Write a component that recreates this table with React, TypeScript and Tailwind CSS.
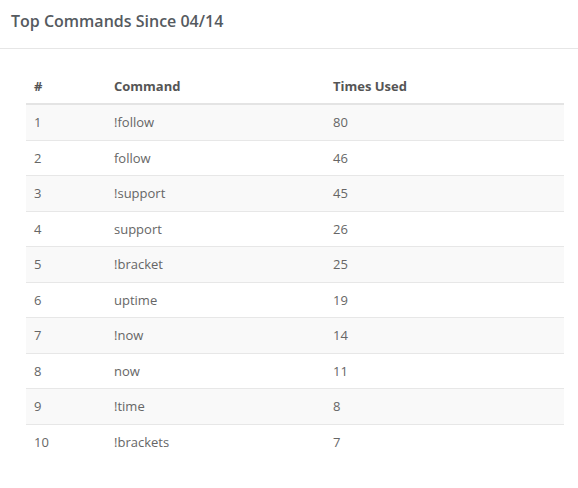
const rows: [number, string, number][] = [
  [1, '!follow', 80],
  [2, 'follow', 46],
  [3, '!support', 45],
  [4, 'support', 26],
  [5, '!bracket', 25],
  [6, 'uptime', 19],
  [7, '!now', 14],
  [8, 'now', 11],
  [9, '!time', 8],
  [10, '!brackets', 7],
]

export default function App() {
  return (
    <div className="w-[578px] h-[488px] bg-white font-['Open_Sans',sans-serif] text-[13px] text-[#666]">
      {/* panel heading */}
      <div className="h-[49px] border-b border-[#e6e6e6] px-[11px] flex items-center">
        <h3 className="text-[16px] font-semibold text-[#555a60] leading-none pb-[7px]">Top Commands Since 04/14</h3>
      </div>

      <div className="px-[26px] pt-[19px] pr-[14px]">
        <table className="w-full border-collapse">
          <thead>
            <tr className="border-b-2 border-[#e4e4e4]">
              <th className="w-[80px] text-left font-bold text-[#555] px-2 pt-[9px] pb-[7px] leading-[19px]">#</th>
              <th className="w-[219px] text-left font-bold text-[#555] px-2 pt-[9px] pb-[7px] leading-[19px]">Command</th>
              <th className="text-left font-bold text-[#555] px-2 pt-[9px] pb-[7px] leading-[19px]">Times Used</th>
            </tr>
          </thead>
          <tbody>
            {rows.map(([n, cmd, used]) => (
              <tr key={n} className="border-t border-[#e7e7e7] odd:bg-[#f9f9f9]">
                <td className="px-2 py-2 leading-[18.5px]">{n}</td>
                <td className="px-2 py-2 leading-[18.5px]">{cmd}</td>
                <td className="px-2 py-2 leading-[18.5px]">{used}</td>
              </tr>
            ))}
          </tbody>
        </table>
      </div>
    </div>
  )
}
